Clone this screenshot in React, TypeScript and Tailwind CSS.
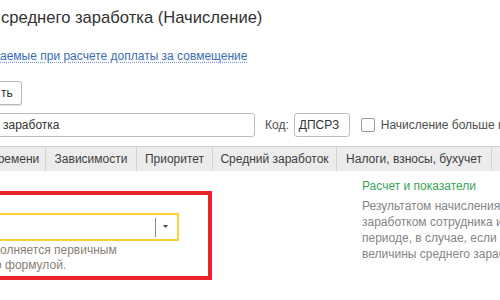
export default function App() {
  const tabs = [
    { label: "ремени", w: "w-[54px] -ml-[8px]" },
    { label: "Зависимости", w: "w-[91px]" },
    { label: "Приоритет", w: "w-[76px]" },
    { label: "Средний заработок", w: "w-[124px]" },
    { label: "Налоги, взносы, бухучет", w: "w-[155px]" },
    { label: "Пересчет", w: "w-[80px]" },
  ];

  return (
    <div
      className="w-[500px] h-[300px] overflow-hidden bg-white text-[12px] text-[#404040]"
      style={{ fontFamily: '"Liberation Sans", Arial, sans-serif' }}
    >
      {/* Title */}
      <div className="pt-[6px] pl-[1px] text-[16.6px] leading-[24px] text-[#333333] whitespace-nowrap">
        среднего заработка (Начисление)
      </div>

      {/* Link */}
      <div className="mt-[18px] h-[16px] leading-[16px] whitespace-nowrap">
        <span className="text-[#3b6db3] underline decoration-dotted decoration-[#7a9cc9] underline-offset-2">
          аемые при расчете доплаты за совмещение
        </span>
      </div>

      {/* Command bar */}
      <div className="mt-[17px] flex">
        <button className="-ml-[3px] w-[25px] h-[24px] pl-[3px] text-left border border-[#b8b8b8] rounded-[3px] bg-white text-[#333333] shadow-[0_1px_1px_rgba(0,0,0,0.12)]">
          ть
        </button>
      </div>

      {/* Name / code row */}
      <div className="mt-[8px] flex items-center h-[24px] whitespace-nowrap">
        <div className="-ml-[3px] w-[258px] shrink-0 h-[24px] border border-[#bdbdbd] rounded-[3px] pl-[5px] leading-[22px] text-[#333333]">
          заработка
        </div>
        <span className="ml-[10px] shrink-0 text-[#4d4d4d]">Код:</span>
        <div className="ml-[5px] w-[56px] shrink-0 h-[24px] border border-[#bdbdbd] rounded-[3px] pl-[4px] leading-[22px] text-[#333333]">
          ДПСРЗ
        </div>
        <div className="ml-[11px] w-[14px] h-[14px] shrink-0 border border-[#9a9a9a] rounded-[2px] bg-white" />
        <span className="ml-[6px] shrink-0 text-[#4d4d4d]">Начисление больше не используется</span>
      </div>

      {/* Tabs */}
      <div className="mt-[9px] flex h-[25px] border-b border-[#cfcfcf] whitespace-nowrap">
        {tabs.map((t) => (
          <div
            key={t.label}
            className={`${t.w} shrink-0 h-[25px] flex items-center justify-center bg-[#ececec] border-t border-r border-[#d2d2d2] text-[#404040]`}
          >
            {t.label}
          </div>
        ))}
      </div>

      {/* Content */}
      <div className="flex">
        <div className="w-[362px] shrink-0 pt-[20px]">
          <div className="-ml-[10px] w-[222px] h-[89px] border-[4px] border-[#e8232a] pt-[18px]">
            <div className="w-[185px] h-[28px] border-2 border-[#fcd030] flex items-center justify-end">
              <div className="w-px h-[19px] bg-[#8a8a8a]" />
              <svg width="20" height="8" viewBox="0 0 20 8" className="mr-[1px]">
                <path d="M7 2h5l-2.5 3z" fill="#444" />
              </svg>
            </div>
            <div className="mt-[2px] ml-[6px] leading-[15px] text-[#8a7f74] whitespace-nowrap">
              <div>олняется первичным</div>
              <div className="-ml-[5px]">о формулой.</div>
            </div>
          </div>
        </div>
        <div className="pt-[7px] leading-[16px] whitespace-nowrap">
          <div className="text-[#3aa35a]">Расчет и показатели</div>
          <div className="mt-[4px] text-[#858585]">
            <div>Результатом начисления является</div>
            <div>заработком сотрудника и</div>
            <div>периоде, в случае, если</div>
            <div>величины среднего заработка</div>
          </div>
        </div>
      </div>
    </div>
  );
}
